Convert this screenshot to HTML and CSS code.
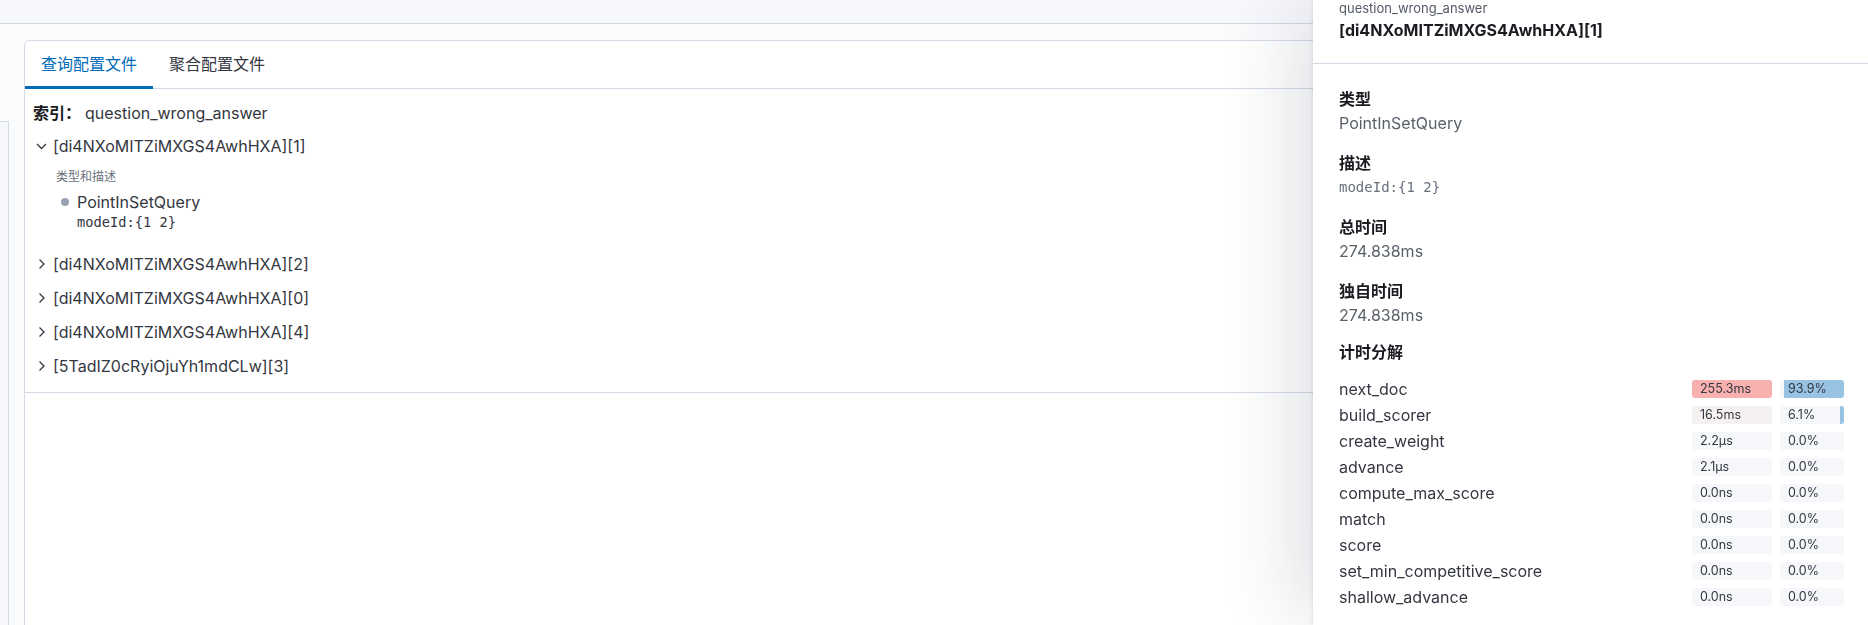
FILE: index.html
```html
<!DOCTYPE html>
<html lang="zh-CN">
<head>
<meta charset="utf-8">
<title>Profiler</title>
<link rel="stylesheet" href="styles.css">
</head>
<body>
<header class="topbar"></header>
<div class="main">
  <div class="side-strip"></div>
  <section class="panel">
    <div class="tabs">
      <div class="tab active">查询配置文件</div>
      <div class="tab">聚合配置文件</div>
    </div>
    <div class="tree">
      <div class="index-row"><strong class="index-label">索引：</strong><span>question_wrong_answer</span></div>
      <div class="node open">
        <div class="node-head">
          <svg class="chev" viewBox="0 0 16 16"><path d="M3.5 6 L8 10.5 L12.5 6"/></svg>
          <span>[di4NXoMITZiMXGS4AwhHXA][1]</span>
        </div>
        <div class="node-details">
          <div class="details-title">类型和描述</div>
          <div class="details-item">
            <span class="bullet"></span>
            <div class="details-text">
              <div class="q-type">PointInSetQuery</div>
              <div class="q-desc">modeId:{1 2}</div>
            </div>
          </div>
        </div>
      </div>
      <div class="node">
        <div class="node-head">
          <svg class="chev" viewBox="0 0 16 16"><path d="M6 3.5 L10.5 8 L6 12.5"/></svg>
          <span>[di4NXoMITZiMXGS4AwhHXA][2]</span>
        </div>
      </div>
      <div class="node">
        <div class="node-head">
          <svg class="chev" viewBox="0 0 16 16"><path d="M6 3.5 L10.5 8 L6 12.5"/></svg>
          <span>[di4NXoMITZiMXGS4AwhHXA][0]</span>
        </div>
      </div>
      <div class="node">
        <div class="node-head">
          <svg class="chev" viewBox="0 0 16 16"><path d="M6 3.5 L10.5 8 L6 12.5"/></svg>
          <span>[di4NXoMITZiMXGS4AwhHXA][4]</span>
        </div>
      </div>
      <div class="node">
        <div class="node-head">
          <svg class="chev" viewBox="0 0 16 16"><path d="M6 3.5 L10.5 8 L6 12.5"/></svg>
          <span>[5TadIZ0cRyiOjuYh1mdCLw][3]</span>
        </div>
      </div>
    </div>
  </section>
</div>

<aside class="flyout">
  <div class="fo-header">
    <div class="fo-sub">question_wrong_answer</div>
    <div class="fo-title">[di4NXoMITZiMXGS4AwhHXA][1]</div>
  </div>
  <div class="fo-body">
    <div class="fo-section">
      <div class="fo-label">类型</div>
      <div class="fo-value">PointInSetQuery</div>
    </div>
    <div class="fo-section">
      <div class="fo-label">描述</div>
      <div class="fo-value mono">modeId:{1 2}</div>
    </div>
    <div class="fo-section">
      <div class="fo-label">总时间</div>
      <div class="fo-value">274.838ms</div>
    </div>
    <div class="fo-section tight">
      <div class="fo-label">独自时间</div>
      <div class="fo-value">274.838ms</div>
    </div>
    <div class="fo-label">计时分解</div>
    <div class="timing">
      <div class="t-row">
        <span class="t-name">next_doc</span>
        <span class="t-time hot">255.3ms</span>
        <span class="t-pct"><span class="t-fill" style="width:93.9%"></span><span class="t-pct-text">93.9%</span></span>
      </div>
      <div class="t-row">
        <span class="t-name">build_scorer</span>
        <span class="t-time warm">16.5ms</span>
        <span class="t-pct"><span class="t-fill" style="width:6.1%"></span><span class="t-pct-text">6.1%</span></span>
      </div>
      <div class="t-row">
        <span class="t-name">create_weight</span>
        <span class="t-time">2.2µs</span>
        <span class="t-pct"><span class="t-pct-text">0.0%</span></span>
      </div>
      <div class="t-row">
        <span class="t-name">advance</span>
        <span class="t-time">2.1µs</span>
        <span class="t-pct"><span class="t-pct-text">0.0%</span></span>
      </div>
      <div class="t-row">
        <span class="t-name">compute_max_score</span>
        <span class="t-time">0.0ns</span>
        <span class="t-pct"><span class="t-pct-text">0.0%</span></span>
      </div>
      <div class="t-row">
        <span class="t-name">match</span>
        <span class="t-time">0.0ns</span>
        <span class="t-pct"><span class="t-pct-text">0.0%</span></span>
      </div>
      <div class="t-row">
        <span class="t-name">score</span>
        <span class="t-time">0.0ns</span>
        <span class="t-pct"><span class="t-pct-text">0.0%</span></span>
      </div>
      <div class="t-row">
        <span class="t-name">set_min_competitive_score</span>
        <span class="t-time">0.0ns</span>
        <span class="t-pct"><span class="t-pct-text">0.0%</span></span>
      </div>
      <div class="t-row">
        <span class="t-name">shallow_advance</span>
        <span class="t-time">0.0ns</span>
        <span class="t-pct"><span class="t-pct-text">0.0%</span></span>
      </div>
    </div>
  </div>
</aside>
</body>
</html>
```

FILE: styles.css
```css
* { box-sizing: border-box; }

html, body {
  margin: 0;
  height: 100%;
}

body {
  font-family: Inter, "Noto Sans CJK SC", sans-serif;
  font-size: 16px;
  color: #343741;
  background: #fafbfd;
  overflow: hidden;
}

.topbar {
  height: 24px;
  background: #f7f8fc;
  border-bottom: 1px solid #d3dae6;
}

.main {
  display: flex;
  height: calc(100% - 24px);
}

.side-strip {
  width: 9px;
  margin-top: 97px;
  background: #f5f7fa;
  border-top: 1px solid #d3dae6;
  border-right: 1px solid #d3dae6;
}

.panel {
  flex: 1;
  margin: 16px 24px 0 15px;
  background: #fff;
  border: 1px solid #d3dae6;
  border-bottom: none;
  border-radius: 6px 6px 0 0;
}

.tabs {
  display: flex;
  border-bottom: 1px solid #d3dae6;
}

.tab {
  position: relative;
  height: 47px;
  line-height: 47px;
  padding: 0 16px;
  font-size: 16px;
  color: #343741;
}

.tab.active {
  color: #006bb8;
}

.tab.active::after {
  content: "";
  position: absolute;
  left: 0;
  right: 0;
  bottom: -1px;
  height: 3px;
  background: #006bb8;
}

.tree {
  padding: 12px 8px 14px 8px;
  border-bottom: 1px solid #d3dae6;
}

.index-row {
  display: flex;
  line-height: 24px;
  margin-bottom: 9px;
  gap: 4px;
}

.index-label {
  color: #1a1c21;
  font-weight: 700;
}

.node {
  margin-bottom: 10px;
}

.node:last-child {
  margin-bottom: 0;
}

.node-head {
  display: flex;
  align-items: center;
  line-height: 24px;
  gap: 3px;
}

.chev {
  width: 17px;
  height: 16px;
  fill: none;
  stroke: #343741;
  stroke-width: 1.3;
}

.node-details {
  margin-left: 23px;
  padding: 11px 0 11px;
}

.details-title {
  font-size: 12px;
  line-height: 16px;
  color: #69707d;
}

.details-item {
  display: flex;
  margin-top: 6px;
}

.bullet {
  width: 8px;
  height: 8px;
  border-radius: 50%;
  background: #98a2b3;
  margin: 7px 8px 0 5px;
}

.q-type {
  line-height: 22px;
  color: #343741;
}

.q-desc {
  font-family: "DejaVu Sans Mono", "Liberation Mono", monospace;
  font-size: 13.7px;
  line-height: 18px;
  color: #343741;
}

/* Flyout */
.flyout {
  position: fixed;
  top: 0;
  right: 0;
  width: 555px;
  height: 100%;
  background: #fff;
  box-shadow: -1px 0 3px rgba(0, 0, 0, 0.08), -30px 0 70px -10px rgba(30, 40, 70, 0.14);
}

.fo-header {
  padding: 0 24px 23px 26px;
  border-bottom: 1px solid #d3dae6;
}

.fo-sub {
  font-size: 13px;
  line-height: 16px;
  color: #535966;
}

.fo-title {
  margin-top: 4px;
  font-size: 16px;
  line-height: 20px;
  font-weight: 700;
  color: #1a1c21;
}

.fo-body {
  padding: 23px 24px 0 26px;
}

.fo-section {
  margin-bottom: 16px;
}

.fo-section.tight {
  margin-bottom: 13px;
}

.fo-label {
  font-size: 16px;
  line-height: 24px;
  font-weight: 600;
  color: #1a1c21;
}

.fo-value {
  line-height: 24px;
  color: #5a606b;
}

.fo-value.mono {
  font-family: "DejaVu Sans Mono", "Liberation Mono", monospace;
  font-size: 14px;
  color: #69707d;
}

.timing {
  margin-top: 12px;
}

.t-row {
  display: flex;
  align-items: center;
  height: 26px;
}

.t-name {
  flex: 1;
  color: #343741;
}

.t-time,
.t-pct {
  height: 18px;
  line-height: 18px;
  font-size: 12.5px;
  border-radius: 3px;
  padding-left: 8px;
  background: #f5f7fa;
  color: #343741;
}

.t-time {
  width: 80px;
  margin-right: 8px;
}

.t-time.hot {
  background: #f9b1b0;
}

.t-time.warm {
  background: #f5f1f1;
}

.t-pct {
  position: relative;
  width: 64px;
  overflow: hidden;
}

.t-fill {
  position: absolute;
  top: 0;
  right: 0;
  bottom: 0;
  background: #98c3e3;
}

.t-pct-text {
  position: relative;
}
```
